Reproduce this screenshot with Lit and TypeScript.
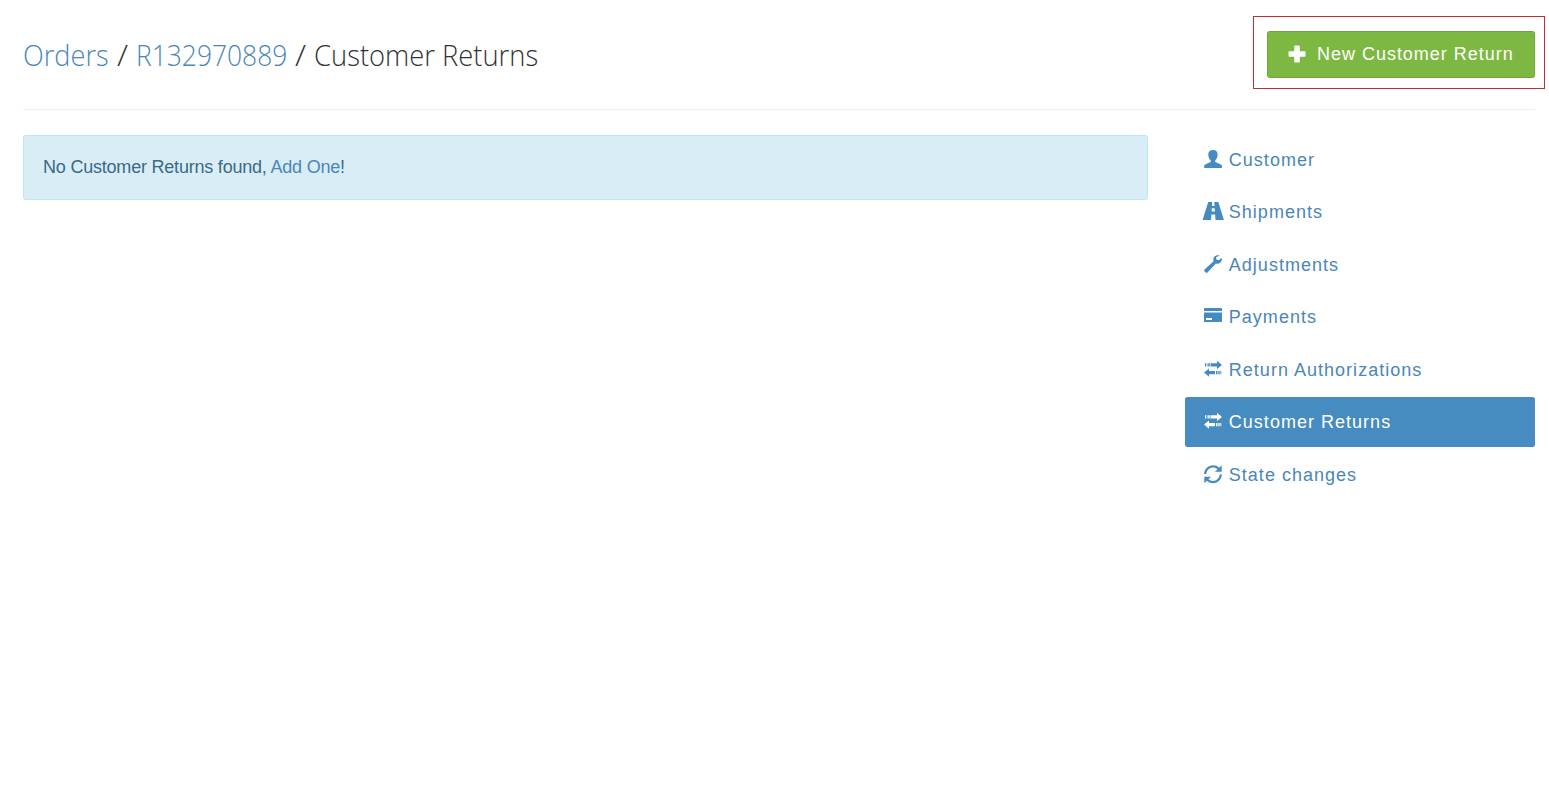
import { LitElement, html, svg, css } from 'lit';
import { customElement } from 'lit/decorators.js';
import { classMap } from 'lit/directives/class-map.js';

const icons = {
  user: svg`<path d="M10 0C7.200 0 5.300 1.600 5.300 4.200c0 2.700.9 4.800 2.200 6 .500.600.400 1.700-.4 2.100L3.200 13.900C1.800 14.500 1.200 15 1.200 15.800v2.100h17.700v-2.100c0-.8-.7-1.300-2-1.900l-4.100-1.600c-.8-.4-.9-1.500-.4-2.100 1.300-1.200 2.200-3.300 2.200-6C14.600 1.600 12.800 0 10 0z"/>`,
  road: svg`<path d="M5.200 0h4L9 3.900h2.500L11.300 0h4L20.900 17.900H12.500L12.100 12.600H8.400l-.4 5.300H-.4zM8.800 6.200l-.2 3.400h3.300l-.2-3.400z" fill-rule="evenodd"/>`,
  wrench: svg`<path d="M16.700.5C14.700-.2 12.600.2 11.300 1.700c-1.100 1.300-1.300 3-.7 4.500L1.500 14.500c-.5.500-.5 1.200 0 1.700l1.300 1.300c.5.500 1.200.5 1.700 0l8.400-9c1.500.5 3.200.2 4.400-1 1.400-1.300 1.900-3 1.400-4.700l-2.800 2.400-2.500-.6-.6-2.100z"/>`,
  card: svg`<path d="M2 1h16c.6 0 1 .4 1 1v1.900H1V2c0-.6.4-1 1-1zM1 5.500h18v8.500c0 .6-.4 1-1 1H2c-.6 0-1-.4-1-1zm2 5.500v2h6v-2z" fill-rule="evenodd"/>`,
  transfer: svg`<path d="M14 .7l5 4.200-5 4.200V6.500H7.500V3.300H14zM5.200 3.300h1.600v3.200H5.200zM3.700 3.300h.8v3.200h-.8zM2 3.300h1v3.200H2zM6 8.400L1 12.600l5 4.200V14.200h6V11H6zM13 11h1.500v3.200H13zM15.300 11h1.400v3.200h-1.400zM17.400 11h.9v3.200h-.9z"/>`,
  refresh: svg`<path d="M1 9C1.500 3.900 5.300.3 10 .3c2.500 0 4.500.8 6.100 2.400L18.700.2v6.600h-6.800l2.600-2.500C13.200 3.200 11.700 2.600 10 2.600 6.600 2.600 3.700 5.200 3.300 9zM19 9.500c-.5 5.100-4.300 8.700-9 8.700-2.500 0-4.500-.8-6.100-2.400L1.300 18.300v-6.600h6.800l-2.600 2.500c1.300 1.100 2.800 1.700 4.500 1.700 3.400 0 6.300-2.600 6.700-6.400z"/>`,
};

const nav: { label: string; icon: keyof typeof icons; active?: boolean }[] = [
  { label: 'Customer', icon: 'user' },
  { label: 'Shipments', icon: 'road' },
  { label: 'Adjustments', icon: 'wrench' },
  { label: 'Payments', icon: 'card' },
  { label: 'Return Authorizations', icon: 'transfer' },
  { label: 'Customer Returns', icon: 'transfer', active: true },
  { label: 'State changes', icon: 'refresh' },
];

@customElement('app-root')
export class AppRoot extends LitElement {
  static styles = css`
    :host {
      display: block;
      box-sizing: border-box;
      height: 800px;
      padding: 0 14px 0 23px;
      background: #fff;
      font: 18px/25px "Liberation Sans", Arial, sans-serif;
      color: #333;
    }
    a { color: #4a86bb; text-decoration: none; }
    header {
      display: flex;
      justify-content: space-between;
      align-items: flex-start;
      box-sizing: border-box;
      height: 110px;
      padding-top: 31px;
      border-bottom: 1px solid #eee;
    }
    h1 {
      display: flex;
      margin: 3px 0 0;
      font: 300 30px/42px "Open Sans", sans-serif;
      white-space: pre;
    }
    h1 > * { flex: none; transform-origin: 0 50%; }
    .orders { width: 94px; transform: scaleX(0.905); }
    .slash { width: 19px; transform: scaleX(1.08); }
    .number { width: 159px; transform: scaleX(0.88); }
    .current { transform: scaleX(0.912); }
    .action { position: relative; }
    .frame {
      position: absolute;
      inset: -15px -10px -11px -14px;
      border: 1px solid #c22d34;
      pointer-events: none;
    }
    .button {
      display: flex;
      align-items: center;
      box-sizing: border-box;
      width: 268px;
      height: 47px;
      padding: 0 0 1px 20px;
      border: 1px solid #6fa63b;
      border-radius: 2.5px;
      background: #7db843;
      color: #fff;
      letter-spacing: 0.98px;
      white-space: nowrap;
    }
    .plus { width: 18px; height: 18px; margin-right: 11px; fill: #fff; }
    main { display: flex; justify-content: space-between; align-items: flex-start; }
    .alert {
      box-sizing: border-box;
      width: 1125px;
      height: 65px;
      margin-top: 25px;
      padding: 18.500px 19px;
      border: 1px solid #bce8f1;
      border-radius: 2.5px;
      background: #d9edf6;
      color: #3a6a86;
      letter-spacing: -0.21px;
    }
    nav {
      display: flex;
      flex-direction: column;
      gap: 2.5px;
      width: 350px;
      margin-top: 24.5px;
    }
    .item {
      display: flex;
      align-items: center;
      box-sizing: border-box;
      height: 50px;
      padding-left: 18px;
      border-radius: 2.5px;
      letter-spacing: 1.02px;
    }
    .item span { margin-top: 1.1px; }
    .icon { width: 20px; height: 20px; margin-right: 5.8px; fill: #458bc2; overflow: visible; }
    .active { background: #478cc1; color: #fff; }
    .active .icon { fill: #fff; }
  `;

  render() {
    return html`
      <header>
        <h1><a class="orders" href="#">Orders</a><span class="slash">/</span><a class="number" href="#">R132970889</a><span class="slash">/</span><span class="current">Customer Returns</span></h1>
        <div class="action">
          <a class="button" href="#">
            <svg class="plus" viewBox="0 0 18 18"><path d="M7 .5h4q.8 0 .8.800v5h5q.7 0 .7.700v4q0 .8-.7.8h-5v5q0 .7-.8.700H7q-.8 0-.8-.7v-5h-5q-.7 0-.7-.8V7q0-.7.7-.7h5v-5Q6.200.5 7 .5z"/></svg>
            <span>New Customer Return</span>
          </a>
          <div class="frame"></div>
        </div>
      </header>
      <main>
        <div class="alert">No Customer Returns found, <a href="#">Add One</a>!</div>
        <nav>
          ${nav.map(n => html`<a href="#" class=${classMap({ item: true, active: !!n.active })}>
            <svg class="icon" viewBox="0 0 20 20">${icons[n.icon]}</svg><span>${n.label}</span>
          </a>`)}
        </nav>
      </main>
    `;
  }
}
